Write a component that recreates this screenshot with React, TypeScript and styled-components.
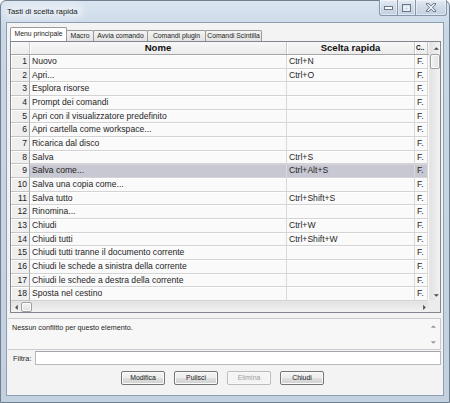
import * as React from "react";
import styled, { createGlobalStyle } from "styled-components";

const SANS = `"Liberation Sans", Arial, sans-serif`;

const GlobalStyle = createGlobalStyle`
  html, body { margin: 0; padding: 0; background: #ffffff; }
  body { font-family: ${SANS}; }
  * { box-sizing: border-box; }
`;

const Window = styled.div`
  width: 450px;
  height: 403px;
  display: flex;
  flex-direction: column;
  padding: 0 5px 6px 5px;
  border: 1px solid #6f7f90;
  border-radius: 6px 6px 0 0;
  background: linear-gradient(to bottom, #dbe5f1 0px, #c8d6e6 30px, #c2d0e0 100%);
`;

const TitleBar = styled.div`
  height: 21px;
  display: flex;
  justify-content: space-between;
  align-items: flex-start;
`;

const Title = styled.div`
  margin-top: 6px;
  padding: 0 3px 0 1px;
  font-size: 7.8px;
  color: #1b1b1b;
  background: rgba(255, 255, 255, 0.35);
  border-radius: 6px;
  box-shadow: 0 0 6px 3px rgba(255, 255, 255, 0.35);
`;

const CaptionGroup = styled.div`
  display: flex;
  margin-top: -1px;
  margin-right: -3px;
`;

const CaptionButton = styled.div<{ $w: number; $close?: boolean }>`
  width: ${(p) => p.$w}px;
  height: 16px;
  display: flex;
  align-items: center;
  justify-content: center;
  border: 1px solid #8797aa;
  border-top: none;
  margin-left: -1px;
  border-radius: ${(p) => (p.$close ? "0 0 3px 0" : "0")};
  background: linear-gradient(to bottom, #e4ebf4, #cdd9e7 55%, #c3d1e2);
  box-shadow: inset 0 0 0 1px rgba(255, 255, 255, 0.45);
  &:first-child {
    border-radius: 0 0 0 3px;
  }
`;

const Client = styled.div`
  flex: 1;
  display: flex;
  flex-direction: column;
  border: 1px solid #8e9fb2;
  background: #f3f3f3;
  padding: 4px 2px 0 3px;
`;

const TabStrip = styled.div`
  height: 14px;
  display: flex;
  align-items: flex-end;
`;

const Tab = styled.div<{ $w: number; $active?: boolean }>`
  width: ${(p) => p.$w}px;
  height: ${(p) => (p.$active ? 14 : 11)}px;
  margin-right: -1px;
  border: 1px solid #9a9a9a;
  border-bottom: none;
  border-radius: 2px 2px 0 0;
  background: ${(p) =>
    p.$active ? "#ffffff" : "linear-gradient(to bottom, #f4f4f4, #e2e2e2)"};
  font-size: 6.8px;
  color: #222;
  text-align: center;
  line-height: ${(p) => (p.$active ? 12 : 10)}px;
  white-space: nowrap;
  overflow: hidden;
  position: relative;
  z-index: ${(p) => (p.$active ? 2 : 1)};
`;

const TableFrame = styled.div`
  height: 272px;
  border: 1px solid #82878f;
  display: grid;
  grid-template-columns: 1fr 11px;
  grid-template-rows: 1fr 11px;
  background: #fafafa;
`;

const Grid = styled.div`
  display: flex;
  flex-direction: column;
  overflow: hidden;
`;

const COLS = "19px 257px 128px 13px";

const HeaderRow = styled.div`
  height: 13px;
  display: grid;
  grid-template-columns: ${COLS};
  background: linear-gradient(to bottom, #f7f7f7, #ececec);
  border-bottom: 1px solid #a5a5a5;
`;

const HeaderCell = styled.div`
  border-right: 1px solid #c9c9c9;
  box-shadow: inset 1px 0 0 #ffffff;
  font-weight: bold;
  font-size: 9.6px;
  color: #111;
  text-align: center;
  line-height: 12px;
  white-space: nowrap;
  overflow: hidden;
`;

const SmallHeaderCell = styled(HeaderCell)`
  font-size: 6.5px;
  text-align: left;
  padding-left: 1px;
`;

const Row = styled.div`
  height: 13.67px;
  display: grid;
  grid-template-columns: ${COLS};
`;

const RowHead = styled.div`
  background: #efefef;
  border-right: 1px solid #a9a9a9;
  border-bottom: 1px solid #c4c4c4;
  box-shadow: inset 1px 1px 0 #ffffff;
  text-align: right;
  padding-right: 2px;
  font-size: 8.6px;
  color: #222;
  line-height: 12.5px;
`;

const Cell = styled.div<{ $selected?: boolean }>`
  background: ${(p) => (p.$selected ? "#c7c8d1" : "#fafafa")};
  border-right: 1px solid #d9d9d9;
  border-bottom: 1px solid #d3d3d3;
  box-shadow: inset 0 1px 0 ${(p) => (p.$selected ? "#d2d3db" : "#ffffff")};
  padding-left: 2px;
  font-size: 8.6px;
  color: #262626;
  line-height: 12.5px;
  white-space: nowrap;
  overflow: hidden;
`;

const VScroll = styled.div`
  display: flex;
  flex-direction: column;
  background: linear-gradient(to right, #e3e3e3, #f2f2f2);
  border-left: 1px solid #e6e6e6;
`;

const HScroll = styled.div`
  display: flex;
  align-items: center;
  background: linear-gradient(to bottom, #e3e3e3, #f2f2f2);
  border-top: 1px solid #e6e6e6;
`;

const ArrowBox = styled.div<{ $size: number }>`
  width: ${(p) => p.$size}px;
  height: ${(p) => p.$size}px;
  display: flex;
  align-items: center;
  justify-content: center;
  flex-shrink: 0;
`;

const Spacer = styled.div`
  flex: 1;
`;

const Thumb = styled.div<{ $vertical?: boolean }>`
  width: ${(p) => (p.$vertical ? "10px" : "11px")};
  height: ${(p) => (p.$vertical ? "15px" : "10px")};
  border: 1px solid #a0a0a0;
  border-radius: 2px;
  background: ${(p) =>
    p.$vertical
      ? "linear-gradient(to right, #f3f3f3, #e2e2e2)"
      : "linear-gradient(to bottom, #f3f3f3, #e2e2e2)"};
  box-shadow: inset 0 0 0 1px #fbfbfb;
  margin: 0 auto;
  flex-shrink: 0;
`;

const Corner = styled.div`
  background: #ececec;
`;

const DescBox = styled.div`
  margin-top: 5px;
  margin-left: -2px;
  height: 32px;
  border: 1px solid #cbcbcb;
  border-left: none;
  background: #f7f7f7;
  display: flex;
`;

const DescText = styled.div`
  flex: 1;
  padding: 4px 0 0 4px;
  font-size: 7.2px;
  color: #1e1e1e;
`;

const DescScroll = styled.div`
  width: 9px;
  margin-right: 2px;
  display: flex;
  flex-direction: column;
  justify-content: space-between;
  padding: 5px 0 4px;
  align-items: center;
`;

const FilterRow = styled.div`
  margin-top: 1px;
  height: 14px;
  display: flex;
  align-items: center;
`;

const FilterLabel = styled.label`
  width: 25px;
  padding-left: 3px;
  font-size: 7.4px;
  color: #1e1e1e;
`;

const FilterInput = styled.div`
  flex: 1;
  height: 14px;
  background: #ffffff;
  border: 1px solid #b6bac0;
  border-top-color: #a3a7ad;
`;

const ButtonRow = styled.div`
  margin-top: 6px;
  display: flex;
  justify-content: center;
  gap: 9px;
  padding-right: 6px;
`;

const Button = styled.div<{ $disabled?: boolean }>`
  width: 44px;
  height: 14px;
  border: 1px solid ${(p) => (p.$disabled ? "#b7bcc0" : "#757575")};
  border-radius: 2px;
  background: ${(p) =>
    p.$disabled
      ? "#f4f4f4"
      : "linear-gradient(to bottom, #f4f4f4 0%, #ececec 50%, #dedede 51%, #d2d2d2 100%)"};
  box-shadow: inset 0 0 0 1px ${(p) => (p.$disabled ? "#f9f9f9" : "#fbfbfb")};
  font-size: 6.9px;
  color: ${(p) => (p.$disabled ? "#9c9c9c" : "#1a1a1a")};
  text-align: center;
  line-height: 12px;
`;

type Shortcut = { name: string; keys?: string; selected?: boolean };

const rows: Shortcut[] = [
  { name: "Nuovo", keys: "Ctrl+N" },
  { name: "Apri...", keys: "Ctrl+O" },
  { name: "Esplora risorse" },
  { name: "Prompt dei comandi" },
  { name: "Apri con il visualizzatore predefinito" },
  { name: "Apri cartella come workspace..." },
  { name: "Ricarica dal disco" },
  { name: "Salva", keys: "Ctrl+S" },
  { name: "Salva come...", keys: "Ctrl+Alt+S", selected: true },
  { name: "Salva una copia come..." },
  { name: "Salva tutto", keys: "Ctrl+Shift+S" },
  { name: "Rinomina..." },
  { name: "Chiudi", keys: "Ctrl+W" },
  { name: "Chiudi tutti", keys: "Ctrl+Shift+W" },
  { name: "Chiudi tutti tranne il documento corrente" },
  { name: "Chiudi le schede a sinistra della corrente" },
  { name: "Chiudi le schede a destra della corrente" },
  { name: "Sposta nel cestino" },
];

const tabs = [
  { label: "Menu principale", w: 57 },
  { label: "Macro", w: 28 },
  { label: "Avvia comando", w: 55 },
  { label: "Comandi plugin", w: 59 },
  { label: "Comandi Scintilla", w: 57 },
];

const Arrow: React.FC<{ dir: "up" | "down" | "left" | "right"; color?: string }> = ({
  dir,
  color = "#4d4d4d",
}) => {
  const pts = {
    up: "0,4 3.5,0.5 7,4",
    down: "0,0.5 3.5,4 7,0.5",
    left: "4,0 0.5,3.5 4,7",
    right: "0.5,0 4,3.5 0.5,7",
  }[dir];
  const vertical = dir === "up" || dir === "down";
  return (
    <svg width={vertical ? 7 : 5} height={vertical ? 5 : 7} viewBox={vertical ? "0 0 7 5" : "0 0 5 7"}>
      <polygon points={pts} fill={color} transform="scale(0.75) translate(1 1)" />
    </svg>
  );
};

export default function App() {
  return (
    <>
      <GlobalStyle />
      <Window>
        <TitleBar>
          <Title>Tasti di scelta rapida</Title>
          <CaptionGroup>
            <CaptionButton $w={19}>
              <svg width="9" height="4" viewBox="0 0 9 4">
                <rect x="0.5" y="0.5" width="8" height="3" fill="#ffffff" stroke="#6b7686" strokeWidth="1" />
              </svg>
            </CaptionButton>
            <CaptionButton $w={19}>
              <svg width="9" height="8" viewBox="0 0 9 8">
                <rect x="0.5" y="0.5" width="8" height="7" fill="none" stroke="#6b7686" strokeWidth="1" />
                <rect x="2" y="3" width="5" height="3" fill="none" stroke="#ffffff" strokeWidth="1" />
              </svg>
            </CaptionButton>
            <CaptionButton $w={32} $close>
              <svg width="10" height="9" viewBox="0 0 10 9">
                <path d="M1.5 1 L8.5 8 M8.5 1 L1.5 8" stroke="#6b7686" strokeWidth="3" strokeLinecap="square" />
                <path d="M1.5 1 L8.5 8 M8.5 1 L1.5 8" stroke="#ffffff" strokeWidth="1.2" />
              </svg>
            </CaptionButton>
          </CaptionGroup>
        </TitleBar>
        <Client>
          <TabStrip>
            {tabs.map((t, i) => (
              <Tab key={t.label} $w={t.w} $active={i === 0}>
                {t.label}
              </Tab>
            ))}
          </TabStrip>
          <TableFrame>
            <Grid>
              <HeaderRow>
                <HeaderCell />
                <HeaderCell>Nome</HeaderCell>
                <HeaderCell>Scelta rapida</HeaderCell>
                <SmallHeaderCell>C..</SmallHeaderCell>
              </HeaderRow>
              {rows.map((r, i) => (
                <Row key={i}>
                  <RowHead>{i + 1}</RowHead>
                  <Cell $selected={r.selected}>{r.name}</Cell>
                  <Cell $selected={r.selected}>{r.keys ?? ""}</Cell>
                  <Cell $selected={r.selected}>F.</Cell>
                </Row>
              ))}
            </Grid>
            <VScroll>
              <ArrowBox $size={12}>
                <Arrow dir="up" />
              </ArrowBox>
              <Thumb $vertical />
              <Spacer />
              <ArrowBox $size={12}>
                <Arrow dir="down" />
              </ArrowBox>
            </VScroll>
            <HScroll>
              <ArrowBox $size={10}>
                <Arrow dir="left" />
              </ArrowBox>
              <Thumb />
              <Spacer />
              <ArrowBox $size={10}>
                <Arrow dir="right" />
              </ArrowBox>
            </HScroll>
            <Corner />
          </TableFrame>
          <DescBox>
            <DescText>Nessun conflitto per questo elemento.</DescText>
            <DescScroll>
              <Arrow dir="up" color="#9a9a9a" />
              <Arrow dir="down" color="#9a9a9a" />
            </DescScroll>
          </DescBox>
          <FilterRow>
            <FilterLabel>Filtra:</FilterLabel>
            <FilterInput />
          </FilterRow>
          <ButtonRow>
            <Button>Modifica</Button>
            <Button>Pulisci</Button>
            <Button $disabled>Elimina</Button>
            <Button>Chiudi</Button>
          </ButtonRow>
        </Client>
      </Window>
    </>
  );
}
